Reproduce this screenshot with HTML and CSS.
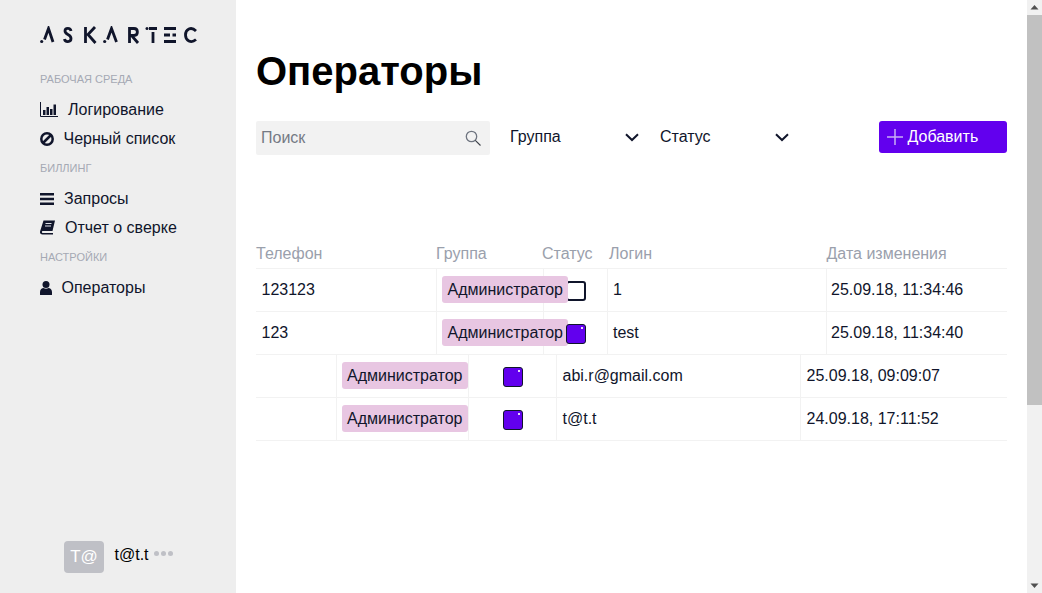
FILE: index.html
```html
<!DOCTYPE html>
<html lang="ru">
  <head>
    <meta charset="UTF-8" />
    <title>Операторы</title>
    <link rel="stylesheet" href="styles.css">
  </head>
  <body>
    <div class="app">
      <aside class="sidebar">
        <svg class="logo" width="158" height="18" viewBox="0 0 158 18" role="img" aria-label="ASKARTEC">
          <g fill="none" stroke="#10152b" stroke-width="2.800">
            <path d="M4.500 13.500L8.500 2.500L13 16" />
            <path d="M31 5C30.500 1.500 25 1.500 25 5C25 9 31 8 31 12.500C31 16.500 25 16.500 24.500 13" />
            <path d="M45.500 1V17M55 1L48 8.500L55.500 17" />
            <path d="M67.500 13.500L71.500 2.500L76.500 16" />
            <path d="M89.500 17V2.500H94C98.500 2.500 98.500 9.500 94 9.500H91.500L98 17" />
            <path d="M109 2.500H117M113 6V17" />
            <path d="M124 2.500H136M124 9H130M132.500 9H136M124 15.500H136" />
            <path d="M156 5C151 0 145.500 3.500 145.500 9C145.500 14.500 151 18 156 13.500" />
          </g>
          <g fill="#10152b">
            <circle cx="1.700" cy="15.500" r="1.600" />
            <circle cx="64.700" cy="15.500" r="1.600" />
            <circle cx="107" cy="2.500" r="1.500" />
          </g>
        </svg>

        <div class="nav-title">Рабочая среда</div>
        <a class="nav-item">
          <svg class="nav-icon" width="18" height="15" viewBox="0 0 18 15">
            <path d="M0.500 0V14.500H18" fill="none" stroke="#10152b" />
            <path d="M3 8h2.500v5H3zM6.500 5H9v8H6.500zM10 7h2.500v6H10zM13.500 2.500H16V13h-2.500z" fill="#10152b" />
          </svg>
          <span class="nav-label nav-label-log">Логирование</span>
        </a>
        <a class="nav-item">
          <svg class="nav-icon" width="14" height="14" viewBox="0 0 14 14">
            <circle cx="7" cy="7" r="5.700" fill="none" stroke="#10152b" stroke-width="2.500" />
            <path d="M3 11L11 3" stroke="#10152b" stroke-width="2.500" />
          </svg>
          <span class="nav-label nav-label-black">Черный список</span>
        </a>

        <div class="nav-title">Биллинг</div>
        <a class="nav-item">
          <svg class="nav-icon" width="14" height="12" viewBox="0 0 14 12">
            <path d="M0 0h14v2.600H0zM0 4.700h14v2.600H0zM0 9.400h14V12H0z" fill="#10152b" />
          </svg>
          <span class="nav-label nav-label-log">Запросы</span>
        </a>
        <a class="nav-item">
          <svg class="nav-icon" width="15" height="15" viewBox="0 0 15 15">
            <path d="M3.500 0.500H15L12.500 11H3C1.500 11 1.500 13 3 13H13V14.500H2.500C0.500 14.500 -0.500 13 0.200 11Z" fill="#10152b" />
            <path d="M5.500 3.500h6M5 6h6" stroke="#dfe2ea" />
          </svg>
          <span class="nav-label nav-label-book">Отчет о сверке</span>
        </a>

        <div class="nav-title">Настройки</div>
        <a class="nav-item">
          <svg class="nav-icon" width="12" height="14" viewBox="0 0 12 14">
            <circle cx="6" cy="3.500" r="3.500" fill="#10152b" />
            <path d="M0.500 14C-0.500 14 0 12.500 0 11C0 8.500 2 7 3.500 7C5 8 7 8 8.500 7C10 7 12 8.500 12 11C12 12.500 12.500 14 11.500 14Z" fill="#10152b" />
          </svg>
          <span class="nav-label nav-label-user">Операторы</span>
        </a>

        <div class="profile">
          <div class="avatar">T@</div>
          <div class="profile-name">t@t.t</div>
          <div class="dots"><i></i><i></i><i></i></div>
        </div>
      </aside>

      <main class="content">
        <h1 class="page-title">Операторы</h1>

        <div class="toolbar">
          <div class="search">
            <span class="search-text">Поиск</span>
            <svg width="16" height="16" viewBox="0 0 16 16">
              <circle cx="6.500" cy="6.500" r="5.200" fill="none" stroke="#6f7580" stroke-width="1.300" />
              <path d="M10.300 10.300L15.500 15.500" stroke="#3c4048" stroke-width="1.100" />
            </svg>
          </div>
          <div class="select select-group">
            <span>Группа</span>
            <svg width="14" height="9" viewBox="0 0 14 9"><path d="M1 1.200L7 7L13 1.200" fill="none" stroke="#10152b" stroke-width="2" /></svg>
          </div>
          <div class="select select-status">
            <span>Статус</span>
            <svg width="14" height="9" viewBox="0 0 14 9"><path d="M1 1.200L7 7L13 1.200" fill="none" stroke="#10152b" stroke-width="2" /></svg>
          </div>
          <button class="add-btn">
            <svg width="16" height="16" viewBox="0 0 16 16"><path d="M8 0V16M0 8H16" stroke="#c9aef5" stroke-width="1.500" /></svg>
            <span>Добавить</span>
          </button>
        </div>

        <div class="table">
          <div class="row row-head">
            <div>Телефон</div>
            <div>Группа</div>
            <div>Статус</div>
            <div>Логин</div>
            <div class="head-date">Дата изменения</div>
          </div>

          <div class="row row-wide">
            <div class="cell cell-phone">123123</div>
            <div class="cell"><span class="badge">Администратор</span></div>
            <div class="cell cell-status"><span class="check"></span></div>
            <div class="cell">1</div>
            <div class="cell cell-date">25.09.18, 11:34:46</div>
          </div>
          <div class="row row-wide">
            <div class="cell cell-phone">123</div>
            <div class="cell"><span class="badge">Администратор</span></div>
            <div class="cell cell-status"><span class="check check-on"></span></div>
            <div class="cell">test</div>
            <div class="cell cell-date">25.09.18, 11:34:40</div>
          </div>
          <div class="row row-narrow">
            <div class="cell"></div>
            <div class="cell"><span class="badge badge-narrow">Администратор</span></div>
            <div class="cell cell-center"><span class="check check-on"></span></div>
            <div class="cell cell-text">abi.r@gmail.com</div>
            <div class="cell cell-text">25.09.18, 09:09:07</div>
          </div>
          <div class="row row-narrow">
            <div class="cell"></div>
            <div class="cell"><span class="badge badge-narrow">Администратор</span></div>
            <div class="cell cell-center"><span class="check check-on"></span></div>
            <div class="cell cell-text">t@t.t</div>
            <div class="cell cell-text">24.09.18, 17:11:52</div>
          </div>
        </div>
      </main>

      <div class="scrollbar">
        <svg width="15" height="15" viewBox="0 0 15 15"><path d="M7.500 5L11.500 9.500H3.500Z" fill="#505050" /></svg>
        <div class="scroll-track"><div class="scroll-thumb"></div></div>
        <svg width="15" height="15" viewBox="0 0 15 15"><path d="M7.500 10L11.500 5.500H3.500Z" fill="#505050" /></svg>
      </div>
    </div>
  </body>
</html>
```

FILE: styles.css
```css
html, body {
  margin: 0;
  padding: 0;
  height: 100%;
  overflow: hidden;
  font-family: "Liberation Sans", Arial, sans-serif;
  font-size: 16px;
  color: #000;
}

.app {
  display: flex;
  height: 593px;
}

/* sidebar */
.sidebar {
  width: 236px;
  flex: none;
  box-sizing: border-box;
  padding: 26px 0 0 40px;
  background: #eee;
  display: flex;
  flex-direction: column;
}

.logo {
  display: block;
  margin-bottom: 20px;
}

.nav-title {
  height: 31px;
  line-height: 30px;
  font-size: 11px;
  text-transform: uppercase;
  color: #a5a9b4;
}

.nav-item {
  display: flex;
  align-items: center;
  height: 29px;
  color: #10152b;
}

.nav-icon {
  flex: none;
}

.nav-label-log {
  margin-left: 10px;
}

.nav-label-black {
  margin-left: 9.500px;
}

.nav-label-book {
  margin-left: 10px;
}

.nav-label-user {
  margin-left: 9.500px;
}

.profile {
  margin-top: auto;
  margin-bottom: 20px;
  margin-left: 24px;
  display: flex;
  align-items: flex-start;
}

.avatar {
  width: 40px;
  height: 32px;
  line-height: 32px;
  border-radius: 4px;
  background: #bfc0c6;
  color: #fff;
  text-align: center;
  font-size: 17px;
}

.profile-name {
  margin-left: 10.500px;
  line-height: 28px;
}

.dots {
  display: flex;
  gap: 2px;
  margin: 10px 0 0 5px;
}

.dots i {
  width: 5px;
  height: 5px;
  border-radius: 50%;
  background: #bfc0c6;
}

/* main */
.content {
  flex: 1;
  min-width: 0;
  padding: 0 20px;
}

.page-title {
  margin: 46px 0 0 0;
  font-size: 40px;
  line-height: 50px;
  font-weight: bold;
}

.toolbar {
  display: flex;
  align-items: flex-start;
  margin-top: 25px;
}

.search {
  width: 234px;
  height: 34px;
  box-sizing: border-box;
  padding: 0 9px 0 5px;
  background: #f2f2f2;
  border-radius: 2px;
  display: flex;
  align-items: center;
  justify-content: space-between;
}

.search-text {
  color: #757a85;
}

.select {
  height: 32px;
  display: flex;
  align-items: center;
  justify-content: space-between;
  color: #10152b;
  width: 129px;
}

.select-group {
  margin-left: 20px;
}

.select-status {
  margin-left: 21px;
}

.add-btn {
  margin-left: auto;
  width: 128px;
  height: 32px;
  padding: 0 0 0 8px;
  border: none;
  border-radius: 3px;
  background: #6200ee;
  color: #fff;
  font: inherit;
  display: flex;
  align-items: center;
  gap: 4.500px;
}

/* table */
.table {
  margin-top: 83px;
}

.row {
  display: grid;
  height: 43px;
  box-sizing: border-box;
  border-bottom: 1px solid #f2f2f2;
}

.row-head {
  height: 31px;
  grid-template-columns: 180px 106px 67px 217px 1fr;
  color: #9aa0ac;
  line-height: 32px;
}

.head-date {
  padding-left: 0.500px;
}

.row-wide {
  grid-template-columns: 180px 107px 64px 219px 1fr;
}

.row-narrow {
  grid-template-columns: 80px 132px 88px 244px 1fr;
}

.cell {
  display: flex;
  align-items: center;
  padding: 0 5px;
  white-space: nowrap;
  color: #10152b;
}

.cell + .cell {
  border-left: 1px solid #f2f2f2;
}

.cell-phone {
  padding-left: 5.500px;
}

.cell-date {
  padding-left: 4px;
}

.cell-text {
  padding-left: 5.500px;
}

.cell-status {
  padding-left: 22px;
}

.cell-center {
  justify-content: center;
}

.badge {
  display: block;
  height: 27px;
  line-height: 27px;
  margin-bottom: 1px;
  padding: 0 5.500px;
  border-radius: 3px;
  background: #e8c6e2;
  position: relative;
  z-index: 1;
}

.badge-narrow {
  padding: 0 5.500px 0 5px;
}

.check {
  display: block;
  flex: none;
  width: 20px;
  height: 20px;
  margin-top: 2px;
  box-sizing: border-box;
  border: 2px solid #10152b;
  border-radius: 3px;
  background: #fff;
  position: relative;
}

.check-on {
  border-width: 1px;
  background: #6200ee;
  z-index: 2;
}

.check-on::after {
  content: "";
  position: absolute;
  top: 2px;
  right: 2px;
  width: 2px;
  height: 2px;
  background: #e6d8fb;
}

/* scrollbar */
.scrollbar {
  width: 15px;
  flex: none;
  background: #f1f1f1;
  display: flex;
  flex-direction: column;
}

.scrollbar svg {
  flex: none;
  display: block;
}

.scroll-track {
  flex: 1;
}

.scroll-thumb {
  height: 390px;
  background: #c1c1c1;
}
```
